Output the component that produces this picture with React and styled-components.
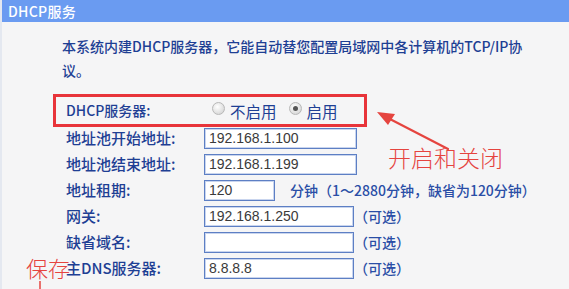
import React from 'react'
import styled, { createGlobalStyle } from 'styled-components'

const GlobalStyle = createGlobalStyle`
    html, body {
        margin: 0;
        padding: 0;
        background: #f5f5f6;
    }
    body {
        width: 569px;
        height: 289px;
        overflow: hidden;
        font-family: "Noto Sans CJK SC", sans-serif;
    }
`

const Page = styled.div`
    position: relative;
    width: 569px;
    height: 289px;
    background: #f5f5f6;
    border-left: 2px solid #e4e8f0;
    box-sizing: border-box;
`

const Header = styled.div`
    height: 22px;
    background: #6a9bf1;
    color: #ffffff;
    font-size: 14px;
    font-weight: 500;
    line-height: 22px;
    padding-left: 6px;
    letter-spacing: 0.3px;
`

const Intro = styled.p`
    margin: 12px 0 0 60px;
    font-size: 14px;
    font-weight: 500;
    line-height: 24px;
    color: #1e3f94;
    white-space: nowrap;
`

const Form = styled.div`
    margin: 12px 0 0 51px;
    width: 314px;
`

const Highlight = styled.div`
    border: 3px solid #e8343a;
    height: 27px;
    display: flex;
    align-items: center;
    padding-left: 10px;
`

const Row = styled.div`
    display: flex;
    align-items: flex-start;
    height: 26px;
    padding-left: 13px;
    white-space: nowrap;
`

const Label = styled.div`
    width: ${p => p.$w || 138}px;
    flex-shrink: 0;
    font-size: ${p => (p.$inBox ? 14 : 15)}px;
    font-weight: 500;
    line-height: ${p => (p.$inBox ? 27 : 22)}px;
    color: #1e3f94;
`

const Input = styled.div`
    margin-top: 1px;
    width: ${p => p.$w}px;
    height: 21px;
    box-sizing: border-box;
    border: 1px solid #5d7fc4;
    box-shadow: inset 0 0 0 1px #c9d5ee;
    background: #ffffff;
    font-family: "Liberation Sans", Arial, sans-serif;
    font-size: 14px;
    line-height: 19px;
    padding-left: 4px;
    color: #3a3a3a;
    flex-shrink: 0;
`

const Note = styled.span`
    font-size: 14px;
    font-weight: 500;
    line-height: 22px;
    color: #2a4ea6;
    margin-left: ${p => p.$gap}px;
`

const RadioGroup = styled.label`
    display: flex;
    align-items: center;
    margin-left: ${p => p.$gap}px;
    font-size: 15.5px;
    color: #1e3f94;
`

const RadioDot = styled.span`
    width: 13px;
    height: 13px;
    border-radius: 50%;
    box-sizing: border-box;
    border: 1px solid #b8b8b8;
    background: radial-gradient(circle at 40% 35%, #ffffff 0%, #dcdcdc 70%, #c8c8c8 100%);
    margin-right: 5px;
    margin-top: -4px;
    display: flex;
    align-items: center;
    justify-content: center;

    &::after {
        content: '';
        display: ${p => (p.$checked ? 'block' : 'none')};
        width: 5px;
        height: 5px;
        border-radius: 50%;
        background: #555;
    }
`

const Annotation = styled.div`
    position: absolute;
    left: ${p => p.$x}px;
    top: ${p => p.$y}px;
    font-size: ${p => p.$size}px;
    color: #e5443f;
    font-weight: 300;
    white-space: nowrap;
    line-height: 1;
`

const Overlay = styled.svg`
    position: absolute;
    left: 0;
    top: 0;
    pointer-events: none;
`

const rows = [
    { label: '地址池开始地址:', value: '192.168.1.100', w: 153 },
    { label: '地址池结束地址:', value: '192.168.1.199', w: 153 },
    { label: '地址租期:', value: '120', w: 71, note: '分钟（1～2880分钟，缺省为120分钟）', gap: 15 },
    { label: '网关:', value: '192.168.1.250', w: 150, note: '（可选）', gap: 0 },
    { label: '缺省域名:', value: '', w: 150, note: '（可选）', gap: 0 },
    { label: '主DNS服务器:', value: '8.8.8.8', w: 150, note: '（可选）', gap: 0 },
]

function App() {
    return (
        <>
            <GlobalStyle />
            <Page>
                <Header>DHCP服务</Header>
                <Intro>
                    本系统内建DHCP服务器，它能自动替您配置局域网中各计算机的TCP/IP协
                    <br />
                    议。
                </Intro>
                <Form>
                    <Highlight>
                        <Label $inBox $w={140}>DHCP服务器:</Label>
                        <RadioGroup $gap={6}>
                            <RadioDot />
                            不启用
                        </RadioGroup>
                        <RadioGroup $gap={12}>
                            <RadioDot $checked />
                            启用
                        </RadioGroup>
                    </Highlight>
                    {rows.map(r => (
                        <Row key={r.label}>
                            <Label>{r.label}</Label>
                            <Input $w={r.w}>{r.value}</Input>
                            {r.note && <Note $gap={r.gap}>{r.note}</Note>}
                        </Row>
                    ))}
                </Form>

                <Annotation $x={386} $y={146} $size={23}>开启和关闭</Annotation>
                <Annotation $x={24} $y={256} $size={22}>保存</Annotation>

                <Overlay width="569" height="289" viewBox="0 0 569 289">
                    <line x1="446" y1="149" x2="384" y2="117" stroke="#e5443f" strokeWidth="2.2" strokeLinecap="round" />
                    <polygon points="375,112 393,114 386,125" fill="#e5443f" />
                    <line x1="38" y1="281" x2="38" y2="289" stroke="#e5443f" strokeWidth="1.5" />
                </Overlay>
            </Page>
        </>
    )
}

export default App
